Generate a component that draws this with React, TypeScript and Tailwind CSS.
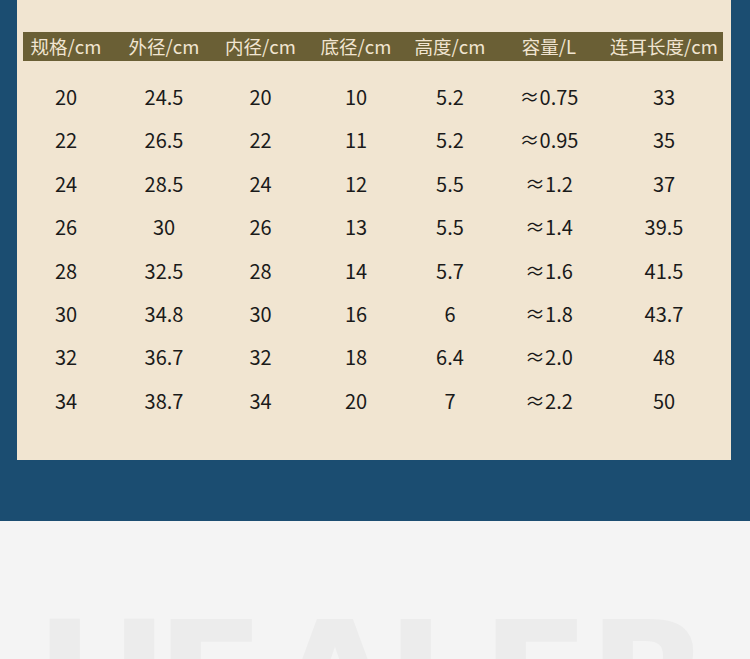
const headers = ['规格/cm', '外径/cm', '内径/cm', '底径/cm', '高度/cm', '容量/L', '连耳长度/cm'];

const rows = [
  ['20', '24.5', '20', '10', '5.2', '≈0.75', '33'],
  ['22', '26.5', '22', '11', '5.2', '≈0.95', '35'],
  ['24', '28.5', '24', '12', '5.5', '≈1.2', '37'],
  ['26', '30', '26', '13', '5.5', '≈1.4', '39.5'],
  ['28', '32.5', '28', '14', '5.7', '≈1.6', '41.5'],
  ['30', '34.8', '30', '16', '6', '≈1.8', '43.7'],
  ['32', '36.7', '32', '18', '6.4', '≈2.0', '48'],
  ['34', '38.7', '34', '20', '7', '≈2.2', '50'],
];

// column widths chosen so the centres line up with the picture
const grid = 'grid grid-cols-[86px_110px_83px_108px_80px_118px_112px]';

// letter boxes for the faded brand word at the bottom
const letters = [
  { ch: 'H', w: 'w-[121px]' },
  { ch: 'E', w: 'w-[117px]' },
  { ch: 'A', w: 'w-[113px]' },
  { ch: 'L', w: 'w-[95px]' },
  { ch: 'E', w: 'w-[107px]' },
  { ch: 'R', w: 'w-[140px]' },
];

export default function App() {
  return (
    <div className="h-[659px] w-[750px] overflow-hidden bg-[#f4f4f4] font-['Noto_Sans_CJK_SC',sans-serif]">
      {/* size table */}
      <div className="h-[521px] bg-[#1b4d71] pl-[17px] pr-[19px]">
        <div className="h-[460px] bg-[#f1e5d1] pt-[32px] pl-[6px] pr-[8px]">
          <div className={`${grid} h-[29px] items-center bg-[#6a5f35] text-[18.5px] text-[#f1e5d1]`}>
            {headers.map((h) => (
              <div key={h} className="text-center leading-[29px] whitespace-nowrap">
                {h}
              </div>
            ))}
          </div>
          <div className="mt-[14px]">
            {rows.map((r, i) => (
              <div key={i} className={`${grid} h-[43.4px] text-[20px] text-[#1a1a1a]`}>
                {r.map((v, j) => (
                  <div key={j} className="text-center leading-[43.4px]">
                    {v}
                  </div>
                ))}
              </div>
            ))}
          </div>
        </div>
      </div>

      {/* faded brand word */}
      <div className="pt-[80px] pl-[35px]">
        <div className="flex font-['DejaVu_Sans',sans-serif] text-[160px] font-bold leading-none text-[#ececec]">
          {letters.map((l, i) => (
            <span key={i} className={`${l.w} shrink-0`}>
              {l.ch}
            </span>
          ))}
        </div>
      </div>
    </div>
  );
}
